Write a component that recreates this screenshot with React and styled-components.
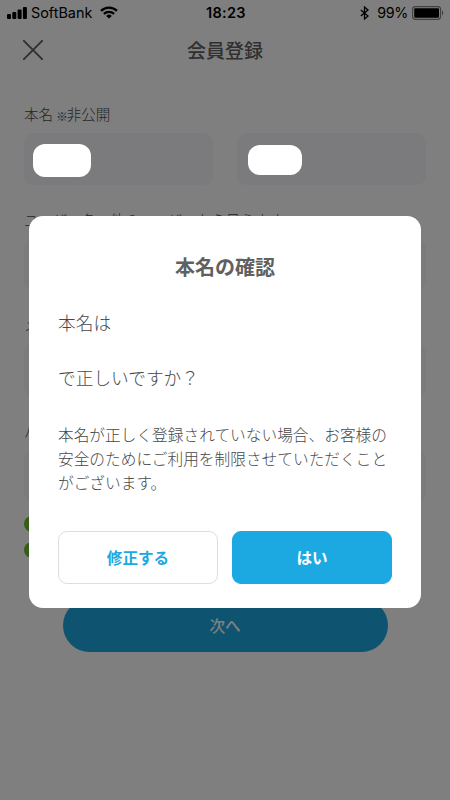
import styled, { createGlobalStyle } from "styled-components";

const App = () => {
  return (
    <Screen>
      <GlobalStyle />
      <StatusBar>
        <Carrier>
          <SignalIcon />
          <CarrierName>SoftBank</CarrierName>
          <WifiIcon />
        </Carrier>
        <Clock>18:23</Clock>
        <Power>
          <BluetoothIcon />
          <Percent>99%</Percent>
          <BatteryIcon />
        </Power>
      </StatusBar>

      <Header>
        <CloseButton aria-label="閉じる">
          <svg width="20" height="20" viewBox="0 0 20 20">
            <path
              d="M0.9 0.9 19.1 19.1M19.1 0.9 0.9 19.1"
              stroke="#606060"
              strokeWidth="1.9"
              strokeLinecap="round"
            />
          </svg>
        </CloseButton>
        <PageTitle>会員登録</PageTitle>
      </Header>

      <Form>
        <Group>
          <Label>
            本名 <Mark>※</Mark>非公開
          </Label>
          <Fields>
            <Field>
              <Mask $width={58} $height={33} />
            </Field>
            <Field $indent={11}>
              <Mask $width={54} $height={30} />
            </Field>
          </Fields>
        </Group>
        <Group>
          <Label>
            ユーザー名 <Mark>※</Mark>他のユーザーから見えます
          </Label>
          <Field />
        </Group>
        <Group>
          <Label>メールアドレス</Label>
          <Field />
        </Group>
        <Group>
          <Label>パスワード</Label>
          <Field />
        </Group>
        <Checks>
          <CheckDot />
          <CheckDot />
        </Checks>
        <NextButton>次へ</NextButton>
      </Form>

      <Overlay>
        <Dialog role="dialog">
          <DialogTitle>本名の確認</DialogTitle>
          <Question>本名は</Question>
          <Question>で正しいですか？</Question>
          <Note>
            本名が正しく登録されていない場合、お客様の
            <br />
            安全のためにご利用を制限させていただくこと
            <br />
            がございます。
          </Note>
          <Actions>
            <DialogButton>修正する</DialogButton>
            <DialogButton $primary>はい</DialogButton>
          </Actions>
        </Dialog>
      </Overlay>
    </Screen>
  );
};

export default App;

const SignalIcon = () => (
  <svg width="20" height="12" viewBox="0 0 20 12">
    <rect x="0" y="7" width="4" height="5" rx="1" />
    <rect x="5.3" y="5" width="4" height="7" rx="1" />
    <rect x="10.6" y="2.6" width="4" height="9.4" rx="1" />
    <rect x="15.9" y="0" width="4" height="12" rx="1" />
  </svg>
);

const WifiIcon = () => (
  <svg width="18" height="13" viewBox="0 0 18 13">
    <g fill="none" stroke="#000" strokeWidth="2.3">
      <path d="M1 4.9a11.4 11.4 0 0 1 16 0" />
      <path d="M3.9 7.9a7.3 7.3 0 0 1 10.2 0" />
    </g>
    <path d="M9 12.6 6.2 9.9a4 4 0 0 1 5.6 0z" />
  </svg>
);

const BluetoothIcon = () => (
  <svg width="9" height="14" viewBox="0 0 9 14">
    <path
      d="M0.8 3.9 8 10.1 4.5 13V1L8 3.9 0.8 10.1"
      fill="none"
      stroke="#000"
      strokeWidth="1.3"
    />
  </svg>
);

const BatteryIcon = () => (
  <svg width="32" height="14" viewBox="0 0 32 14">
    <rect x="0.6" y="0.6" width="28" height="12.8" rx="2.8" fill="none" stroke="#808080" strokeWidth="1.1" />
    <rect x="2.2" y="2.2" width="24.8" height="9.6" rx="1" />
    <path d="M30 4.8c1.7.5 1.7 3.9 0 4.4z" fill="#808080" />
  </svg>
);

const GlobalStyle = createGlobalStyle`
  * {
    box-sizing: border-box;
  }

  body {
    margin: 0;
    background: #fff;
    font-family: "Noto Sans CJK JP", sans-serif;
    color: #606060;
  }

  button {
    font-family: inherit;
    padding: 0;
    border: none;
  }

  svg {
    display: block;
    flex-shrink: 0;
  }
`;

const Screen = styled.div`
  width: 450px;
  height: 800px;
  overflow: hidden;
`;

const StatusBar = styled.div`
  display: grid;
  grid-template-columns: 1fr auto 1fr;
  align-items: center;
  height: 24px;
  padding: 0 7px;
  font-family: Inter, sans-serif;
  font-size: 14px;
  line-height: 24px;
  color: #000;
`;

const Carrier = styled.div`
  display: flex;
  align-items: center;
`;

const CarrierName = styled.span`
  width: 61px;
  margin: 1px 8px 0 4px;
  font-size: 14.4px;
`;

const Clock = styled.div`
  padding: 1px 0 0 2px;
  font-size: 14.5px;
  font-weight: 600;
  letter-spacing: 0.3px;
`;

const Power = styled.div`
  display: flex;
  justify-content: flex-end;
  align-items: center;
  margin-right: -1px;
`;

const Percent = styled.span`
  margin: 1px 4px 0 8px;
  font-size: 14.3px;
  letter-spacing: -0.3px;
`;

const Header = styled.header`
  display: grid;
  grid-template-columns: 20px 1fr 20px;
  align-items: center;
  height: 52px;
  padding: 0 23px;
`;

const CloseButton = styled.button`
  background: none;
`;

const PageTitle = styled.h1`
  margin: 0;
  font-size: 19px;
  line-height: 52px;
  font-weight: 500;
  text-align: center;
`;

const Form = styled.div`
  padding: 26px 24px 0;
`;

const Group = styled.div`
  & + & {
    margin-top: 22.6px;
  }
`;

const Label = styled.div`
  height: 31px;
  font-size: 14.5px;
  line-height: 23px;
  font-weight: 300;
  color: #484848;
  white-space: nowrap;
`;

const Mark = styled.span`
  margin-right: -1px;
  font-size: 11.5px;
  line-height: 1;
  font-weight: 700;
  vertical-align: -1px;
`;

const Fields = styled.div`
  display: grid;
  grid-template-columns: 1fr 1fr;
  gap: 24px;
`;

const Field = styled.div`
  display: flex;
  align-items: center;
  height: 52px;
  padding: 2px 0 0 ${({ $indent }) => $indent || 9}px;
  border-radius: 9px;
  background: #f7f7fa;
`;

/* stays bright above the overlay */
const Mask = styled.div`
  position: relative;
  z-index: 2;
  width: ${({ $width }) => $width}px;
  height: ${({ $height }) => $height}px;
  border-radius: 12px;
  background: #fff;
`;

const Checks = styled.div`
  display: flex;
  flex-direction: column;
  gap: 10px;
  padding-top: 14px;
`;

const CheckDot = styled.div`
  width: 16px;
  height: 16px;
  border-radius: 50%;
  background: #6abe2c;
`;

const NextButton = styled.button`
  display: block;
  width: 325px;
  height: 53px;
  margin: 41.5px auto 0;
  padding-bottom: 2px;
  border-radius: 27px;
  background: #1ca9e2;
  color: #fff;
  font-size: 15.6px;
  font-weight: 500;
`;

const Overlay = styled.div`
  position: fixed;
  inset: 0;
  z-index: 1;
  display: flex;
  justify-content: center;
  align-items: flex-start;
  width: 450px;
  height: 800px;
  padding-top: 216px;
  background: rgba(0, 0, 0, 0.5);
`;

const Dialog = styled.div`
  width: 392px;
  height: 392px;
  padding: 34px 29px 24px;
  border-radius: 14px;
  background: #fff;
  color: #606060;
`;

const DialogTitle = styled.h2`
  margin: 0 0 24px;
  font-size: 20px;
  line-height: 34px;
  font-weight: 700;
  text-align: center;
`;

const Question = styled.p`
  margin: 0 0 27px;
  font-size: 17.7px;
  line-height: 28px;
  font-weight: 300;
  color: #484848;
`;

const Note = styled.p`
  margin: 32px 0 0;
  font-size: 15.7px;
  line-height: 24px;
  font-weight: 300;
  color: #484848;
  white-space: nowrap;
`;

const Actions = styled.div`
  display: grid;
  grid-template-columns: 1fr 1fr;
  gap: 14px;
  margin-top: 36px;
`;

const DialogButton = styled.button`
  height: 53px;
  padding-bottom: 2px;
  border: 1px solid ${({ $primary }) => ($primary ? "#1ca9e2" : "#dedede")};
  border-radius: 9px;
  background: ${({ $primary }) => ($primary ? "#1ca9e2" : "#fff")};
  color: ${({ $primary }) => ($primary ? "#fff" : "#1ca9e2")};
  font-size: 15.6px;
  font-weight: 700;
`;
